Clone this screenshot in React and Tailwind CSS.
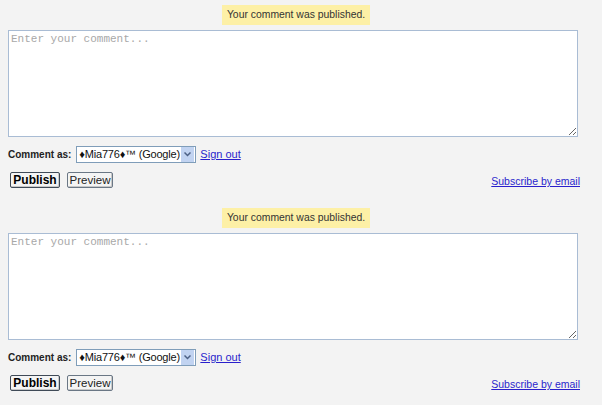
import React from 'react';

const CommentBox = () => (
  <div className="flex flex-col">
    <div className="flex justify-center mr-[10px]">
      <div className="mt-[5px] h-[20px] px-[5px] bg-[#fdf0a6] text-[#333] text-[10.4px] leading-[20px] font-['Liberation_Sans',sans-serif]">
        Your comment was published.
      </div>
    </div>
    <div className="mt-[5px] ml-[8px] w-[570px]">
      <textarea
        className="block w-[570px] h-[107px] bg-white border border-[#a9bcd4] px-[2px] py-[1px] text-[11px] leading-[14px] font-['Liberation_Mono',monospace] placeholder:text-[#a8a8a8] outline-none"
        placeholder="Enter your comment..."
      />
    </div>
    <div className="mt-[9px] ml-[8px] flex items-center h-[17px]">
      <span className="text-[10px] font-bold text-[#222] font-['Liberation_Sans',sans-serif]">Comment as:</span>
      <div className="ml-[5px] w-[120px] h-[17px] flex border border-[#7f9db9] bg-white">
        <span className="flex-1 pl-[2px] text-[11px] leading-[15px] text-[#111] font-['Liberation_Sans',sans-serif] whitespace-nowrap overflow-hidden tracking-[-0.2px]">♦Mia776♦™ (Google)</span>
        <span className="w-[13px] h-[15px] mr-[1px] bg-[#c1d3f1] flex items-center justify-center">
          <svg width="7" height="5" viewBox="0 0 7 5"><path d="M0.5 0.5 L3.5 3.5 L6.5 0.5" fill="none" stroke="#4d6185" strokeWidth="1.5" /></svg>
        </span>
      </div>
      <a href="#" className="ml-[4px] text-[11px] text-[#2a1fcc] underline font-['Liberation_Sans',sans-serif]">Sign out</a>
    </div>
    <div className="mt-[9px] ml-[10px] mr-[22px] flex items-end justify-between">
      <div className="flex gap-[7px]">
        <button className="w-[50px] h-[16px] border border-[#3f4a57] rounded-[2px] bg-[#f4f4f4] text-[12px] leading-[14px] font-bold text-black font-['Liberation_Sans',sans-serif] shadow-[inset_-1px_-1px_0_#c8c8c8]">Publish</button>
        <button className="w-[46px] h-[16px] border border-[#6a7785] rounded-[2px] bg-[#f4f4f4] text-[11.5px] leading-[14px] text-[#222] font-['Liberation_Sans',sans-serif] shadow-[inset_-1px_-1px_0_#c8c8c8]">Preview</button>
      </div>
      <a href="#" className="text-[10.5px] leading-[14px] text-[#2a1fcc] underline font-['Liberation_Sans',sans-serif]">Subscribe by email</a>
    </div>
  </div>
);

export default function App() {
  return (
    <div className="w-[602px] h-[405px] bg-[#f3f3f3] overflow-hidden flex flex-col gap-[15px]">
      <CommentBox />
      <CommentBox />
    </div>
  );
}
